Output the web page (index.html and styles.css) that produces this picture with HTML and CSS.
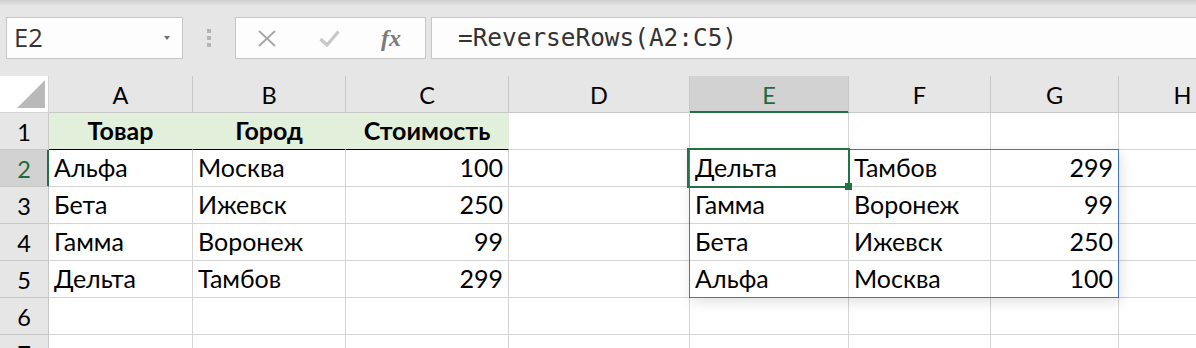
FILE: index.html
```html
<!DOCTYPE html>
<html lang="ru">
<head>
<meta charset="utf-8">
<title>ReverseRows</title>
<link rel="stylesheet" href="styles.css">
</head>
<body>
<div class="fbar">
  <div class="namebox"><span class="name">E2</span><span class="caret"></span></div>
  <div class="grip"><i></i><i></i><i></i></div>
  <div class="btns">
    <div class="slot"><svg width="18" height="17" viewBox="0 0 18 17"><path d="M1 1L17 16M17 1L1 16" stroke="#a6a6a6" stroke-width="1.8" fill="none"/></svg></div>
    <div class="slot"><svg width="21" height="17" viewBox="0 0 21 17"><path d="M1.5 9L8 15L19.5 1.5" stroke="#c8c8c8" stroke-width="3.2" fill="none"/></svg></div>
    <div class="slot"><span class="fx">fx</span></div>
  </div>
  <div class="formula">=ReverseRows(A2:C5)</div>
</div>
<div class="sheet">
  <div class="c corner"><svg width="28" height="28" viewBox="0 0 28 28"><polygon points="28,0 28,28 0,28" fill="#b9b9b9"/></svg></div>
  <div class="c h">A</div><div class="c h">B</div><div class="c h">C</div><div class="c h">D</div><div class="c h sel-col">E</div><div class="c h">F</div><div class="c h">G</div><div class="c h">H</div>

  <div class="c h rh">1</div><div class="c t1">Товар</div><div class="c t1">Город</div><div class="c t1">Стоимость</div><div class="c"></div><div class="c"></div><div class="c"></div><div class="c"></div><div class="c"></div>

  <div class="c h rh sel-row">2</div><div class="c">Альфа</div><div class="c">Москва</div><div class="c num">100</div><div class="c"></div>
  <div class="c anchor">Дельта<span class="spill"></span><span class="sel"><span class="handle"></span></span></div><div class="c">Тамбов</div><div class="c num">299</div><div class="c"></div>

  <div class="c h rh">3</div><div class="c">Бета</div><div class="c">Ижевск</div><div class="c num">250</div><div class="c"></div><div class="c">Гамма</div><div class="c">Воронеж</div><div class="c num">99</div><div class="c"></div>

  <div class="c h rh">4</div><div class="c">Гамма</div><div class="c">Воронеж</div><div class="c num">99</div><div class="c"></div><div class="c">Бета</div><div class="c">Ижевск</div><div class="c num">250</div><div class="c"></div>

  <div class="c h rh">5</div><div class="c">Дельта</div><div class="c">Тамбов</div><div class="c num">299</div><div class="c"></div><div class="c">Альфа</div><div class="c">Москва</div><div class="c num">100</div><div class="c"></div>

  <div class="c h rh">6</div><div class="c"></div><div class="c"></div><div class="c"></div><div class="c"></div><div class="c"></div><div class="c"></div><div class="c"></div><div class="c"></div>

  <div class="c h rh">7</div><div class="c"></div><div class="c"></div><div class="c"></div><div class="c"></div><div class="c"></div><div class="c"></div><div class="c"></div><div class="c"></div>
</div>
</body>
</html>
```
FILE: styles.css
```css
* { box-sizing: border-box; }
html, body { margin: 0; padding: 0; }
body {
  width: 1196px;
  height: 348px;
  overflow: hidden;
  background: #fff;
  font-family: Lato, "Noto Sans", sans-serif;
}

/* formula bar */
.fbar {
  height: 76px;
  background: linear-gradient(#cfcfcf, #e6e6e6 6px);
  display: flex;
  align-items: flex-start;
  padding: 17px 0 0 6px;
}
.namebox {
  width: 177px;
  height: 42px;
  border: 1px solid #c6c6c6;
  background: #fdfdfd;
  display: flex;
  align-items: center;
  justify-content: space-between;
  padding: 0 12px 0 7px;
}
.name {
  font: 25.5px/1 "Open Sans", sans-serif;
  color: #333;
}
.caret {
  width: 0;
  height: 0;
  border-left: 3.5px solid transparent;
  border-right: 3.5px solid transparent;
  border-top: 4px solid #707070;
}
.grip {
  margin: 12px 0 0 24px;
  display: flex;
  flex-direction: column;
  gap: 3px;
}
.grip i {
  display: block;
  width: 4px;
  height: 4px;
  background: #b4b4b4;
}
.btns {
  margin-left: 24px;
  width: 191px;
  height: 42px;
  border: 1px solid #c6c6c6;
  background: #fdfdfd;
  display: flex;
}
.slot {
  width: 62px;
  display: flex;
  align-items: center;
  justify-content: center;
}
.fx {
  font: italic 700 24px/1 "Liberation Serif", serif;
  color: #7a7a7a;
}
.formula {
  flex: 1;
  margin-left: 5px;
  margin-right: -2px;
  height: 42px;
  border: 1px solid #c6c6c6;
  background: #fdfdfd;
  display: flex;
  align-items: center;
  padding-left: 26px;
  font: 24.4px/1 "DejaVu Sans Mono", monospace;
  color: #333;
}

/* sheet */
.sheet {
  display: grid;
  grid-template-columns: 49px 144px 153px 163px 181px 159px 142px 128px 128px;
  grid-auto-rows: 37px;
}
.c {
  border-right: 1px solid #d4d4d4;
  border-bottom: 1px solid #d4d4d4;
  display: flex;
  align-items: flex-end;
  padding: 0 5px 6px;
  font-size: 25px;
  line-height: 1;
  color: #000;
  white-space: nowrap;
}
.num { justify-content: flex-end; }
.h {
  background: #e6e6e6;
  border-color: #c8c8c8;
  justify-content: center;
  font-size: 23.5px;
  padding-bottom: 5px;
}
.corner {
  justify-content: flex-end;
  padding: 0 3px 4px 0;
}
.sel-col {
  background: #d2d2d2;
  color: #1e6b40;
  border-bottom-color: #217346;
  box-shadow: inset 0 -1px #217346;
}
.sel-row {
  background: #d2d2d2;
  color: #1e6b40;
  border-right-color: #217346;
  box-shadow: inset -1px 0 #217346;
}
.t1 {
  background: #e2efda;
  border-right-color: #e2efda;
  border-bottom-color: #000;
  font-weight: 700;
  justify-content: center;
}
.anchor { position: relative; }
.spill {
  position: absolute;
  left: -1px;
  top: -1px;
  width: 430px;
  height: 149px;
  border: 1px solid #4472c4;
  box-shadow: 2px 4px 12px rgba(0, 0, 0, 0.12);
  z-index: 1;
  pointer-events: none;
}
.sel {
  position: absolute;
  left: -3px;
  top: -2px;
  right: -2px;
  bottom: -2px;
  border: 2px solid #217346;
  z-index: 2;
}
.handle {
  position: absolute;
  right: -4px;
  bottom: -4px;
  width: 7px;
  height: 7px;
  background: #217346;
}
```
